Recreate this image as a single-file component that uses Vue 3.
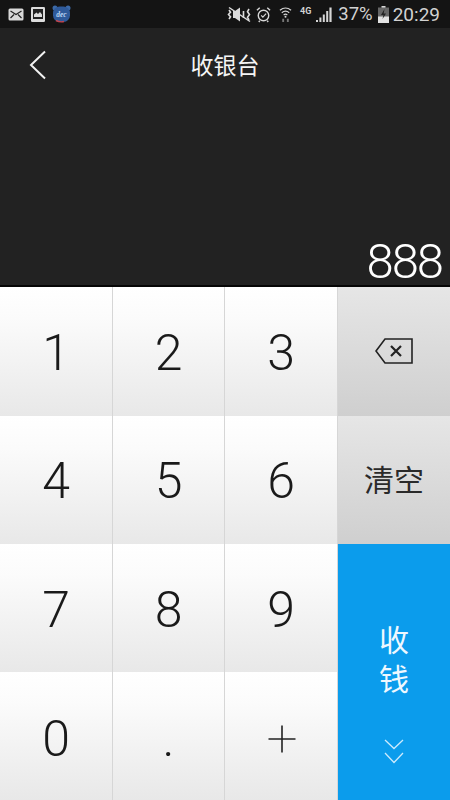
<script setup>
const digits = [
  { label: '1', col: 1, row: 1 }, { label: '2', col: 2, row: 1 }, { label: '3', col: 3, row: 1 },
  { label: '4', col: 1, row: 2 }, { label: '5', col: 2, row: 2 }, { label: '6', col: 3, row: 2 },
  { label: '7', col: 1, row: 3 }, { label: '8', col: 2, row: 3 }, { label: '9', col: 3, row: 3 },
  { label: '0', col: 1, row: 4 }, { label: '.', col: 2, row: 4 }
]
</script>

<template>
  <div class="screen">
    <div class="status">
      <div class="status-left">
        <svg class="ic" width="16" height="13" viewBox="0 0 16 13"><rect x="0.5" y="0.5" width="15" height="12" rx="1.5" fill="#d8d8d8"/><path d="M2.5 3 L8 6.5 L13.5 3 M2.5 10 L6 6.5 M13.5 10 L10 6.5" fill="none" stroke="#222" stroke-width="1.2"/></svg>
        <svg class="ic" width="14" height="15" viewBox="0 0 14 15"><rect x="0" y="0" width="14" height="15" rx="1.2" fill="#ddd"/><rect x="2" y="2" width="10" height="10" fill="#222"/><path d="M3 10 L3 7.5 L5.5 5.5 L7 7 L9 5 L11 7.5 L11 10 Z" fill="#ddd"/></svg>
        <svg class="ic bear" width="19" height="18" viewBox="0 0 19 18"><circle cx="3" cy="3" r="2.5" fill="#3c6aa8"/><circle cx="16" cy="3" r="2.5" fill="#3c6aa8"/><rect x="1" y="1.5" width="17" height="15.5" rx="6.5" fill="#2f5a9a"/><path d="M4 15.5 Q8 17.5 12 16.5" stroke="#c2444c" stroke-width="1.4" fill="none"/><text x="9.5" y="11.5" class="bear-t">dec</text></svg>
      </div>
      <div class="status-right">
        <svg class="ic mute" width="24" height="17" viewBox="0 0 24 17"><path d="M8 5 L13 1.5 V15.5 L8 12 H6 V5 Z" fill="#dcdcdc"/><path d="M2 4 L3.5 6.2 L1.5 8.5 L3.5 10.8 L2 13 M22 3 L20.5 5.7 L22.5 8.5 L20.5 11.3 L22 14 M16.5 5 V12" fill="none" stroke="#dcdcdc" stroke-width="1.6"/><path d="M2 1.5 L23 15.5" stroke="#dcdcdc" stroke-width="1.5"/></svg>
        <svg class="ic alarm" width="15" height="17" viewBox="0 0 16 17"><circle cx="8" cy="9.5" r="5.6" fill="none" stroke="#d6d6d6" stroke-width="1.5"/><path d="M5.5 9.5 L7.3 11.3 L10.8 7.6" fill="none" stroke="#d6d6d6" stroke-width="1.3"/><path d="M1 4 L4 1.2 M15 4 L12 1.2 M4 15 L3 16.5 M12 15 L13 16.5" stroke="#d6d6d6" stroke-width="1.5"/></svg>
        <svg class="ic wifi" width="13" height="17" viewBox="0 0 14 17"><path d="M1 4 Q7 -1 13 4 M3 6.6 Q7 3.2 11 6.6 M5 9 Q7 7.4 9 9" fill="none" stroke="#d6d6d6" stroke-width="1.3"/><circle cx="7" cy="11" r="1.1" fill="#d6d6d6"/><path d="M4.5 13 V16.5 M9.5 13 V16.5" stroke="#777" stroke-width="2"/></svg>
        <span class="net">4G</span>
        <svg class="ic bars" width="16" height="15" viewBox="0 0 16 15"><path d="M0 15 V13 H2 V15 Z M3.4 15 V10.5 H5.4 V15 Z M6.8 15 V7.5 H8.8 V15 Z M10.2 15 V4 H12.2 V15 Z M13.4 15 V0.5 H15.6 V15 Z" fill="#d6d6d6"/></svg>
        <span class="pct">37%</span>
        <svg class="ic batt" width="11" height="17" viewBox="0 0 11 17"><rect x="3.5" y="0" width="4" height="2" fill="#d6d6d6"/><rect x="0" y="1.5" width="11" height="15.5" fill="#666"/><rect x="0" y="10.5" width="11" height="6.5" fill="#e2e2e2"/><path d="M6.5 3 L3 9 H5.5 L4.5 13 L8 7.5 H5.7 Z" fill="#222"/></svg>
        <span class="time">20:29</span>
      </div>
    </div>

    <div class="display">
      <div class="title-bar">
        <svg class="back" width="18" height="30" viewBox="0 0 18 30"><path d="M16 1.5 L2 15 L16 28.5" fill="none" stroke="#f2f2f2" stroke-width="2"/></svg>
        <span class="title">收银台</span>
      </div>
      <div class="amount">888</div>
    </div>

    <div class="pad">
      <button
        v-for="d in digits"
        :key="d.label"
        class="key digit"
        :class="'row-' + d.row"
        :style="{ gridColumn: d.col, gridRow: d.row }"
      >{{ d.label }}</button>
      <button class="key digit plus-key">
        <svg width="28" height="28" viewBox="0 0 28 28"><path d="M14 0.5 V27.5 M0.5 14 H27.5" stroke="#222" stroke-width="1.6"/></svg>
      </button>
      <button class="key side del">
        <svg width="38" height="26" viewBox="0 0 38 26"><path d="M37 1 H10 L1 13 L10 25 H37 Z" fill="none" stroke="#222" stroke-width="1.6"/><path d="M16 8 L26 18 M26 8 L16 18" stroke="#222" stroke-width="2.2"/></svg>
      </button>
      <button class="key side clear">清空</button>
      <button class="key pay">
        <span class="pay-text">收钱</span>
        <svg class="chev" width="20" height="25" viewBox="0 0 20 25"><path d="M1 1 L10 9.5 L19 1 M1 14 L10 23.5 L19 14" fill="none" stroke="#cdeafc" stroke-width="1.3"/></svg>
      </button>
    </div>
  </div>
</template>

<style>
html, body { margin: 0; background: #222; }
</style>

<style scoped>
.screen {
  width: 450px;
  height: 800px;
  display: flex;
  flex-direction: column;
  overflow: hidden;
  font-family: Roboto, "Noto Sans CJK SC", sans-serif;
}
.status {
  height: 28px;
  flex: none;
  background: #141414;
  display: flex;
  justify-content: space-between;
  align-items: center;
  padding: 0 10px 0 8px;
  color: #d2d2d2;
  font-family: Roboto, sans-serif;
}
.status-left, .status-right { display: flex; align-items: center; }
.status-left { gap: 7px; }
.ic { display: block; flex: none; }
.bear-t { font: italic 700 7.5px "Liberation Serif", serif; fill: #bcd6f2; text-anchor: middle; }
.alarm { margin-left: 5px; }
.wifi { margin-left: 8px; }
.net { font-size: 9px; font-weight: 700; margin: 0 0 7px 8px; }
.bars { margin-left: 5px; }
.pct { font-size: 18.5px; margin-left: 6px; }
.batt { margin-left: 5px; }
.time { font-size: 19px; margin-left: 4px; }
.display {
  height: 257px;
  flex: none;
  background: #222;
  border-bottom: 2px solid #060606;
  display: flex;
  flex-direction: column;
  justify-content: space-between;
}
.title-bar {
  height: 74px;
  display: flex;
  align-items: center;
  justify-content: center;
  position: relative;
}
.back { position: absolute; left: 29px; top: 22px; }
.title { color: #f5f5f5; font-size: 23px; font-family: "Noto Sans CJK SC", sans-serif; margin-top: -2px; }
.amount {
  color: #fff;
  font-size: 49px;
  font-weight: 300;
  letter-spacing: -2px;
  line-height: 1;
  text-align: right;
  padding: 0 8px 0 0;
  margin-bottom: -1px;
}
.pad {
  flex: 1;
  display: grid;
  grid-template-columns: 113px 112px 113px 112px;
  grid-template-rows: 129px 128px 128px 128px;
  background: #fff;
}
.key {
  margin: 0;
  padding: 0;
  border: 0;
  display: flex;
  align-items: center;
  justify-content: center;
  font-family: inherit;
  box-sizing: border-box;
}
.digit {
  background: linear-gradient(#fff 0%, #fbfbfb 25%, #e8e8e8 100%);
  border-right: 1px solid #d6d6d6;
  color: #1a1a1a;
  font-size: 50px;
  font-weight: 300;
}
.row-1, .row-2 { padding-top: 2px; }
.row-3 { padding-top: 4px; }
.row-4 { padding-top: 5px; }
.plus-key { grid-column: 3; grid-row: 4; padding: 6px 0 0 1px; }
.side {
  grid-column: 4;
  background: linear-gradient(#e6e6e6, #cfcfcf);
  color: #222;
}
.del { grid-row: 1; padding-bottom: 2px; }
.clear {
  grid-row: 2;
  font-size: 30px;
  font-family: "Noto Sans CJK SC", sans-serif;
  font-weight: 400;
  color: #2a2a2a;
  padding-bottom: 5px;
}
.pay {
  grid-column: 4;
  grid-row: 3 / 5;
  background: #0b9cec;
  color: #eef8ff;
  flex-direction: column;
  justify-content: flex-start;
  padding-top: 75px;
}
.pay-text {
  display: block;
  width: 30px;
  font-family: "Noto Sans CJK SC", sans-serif;
  font-size: 30px;
  line-height: 39px;
}
.chev { margin-top: 42px; }
</style>
